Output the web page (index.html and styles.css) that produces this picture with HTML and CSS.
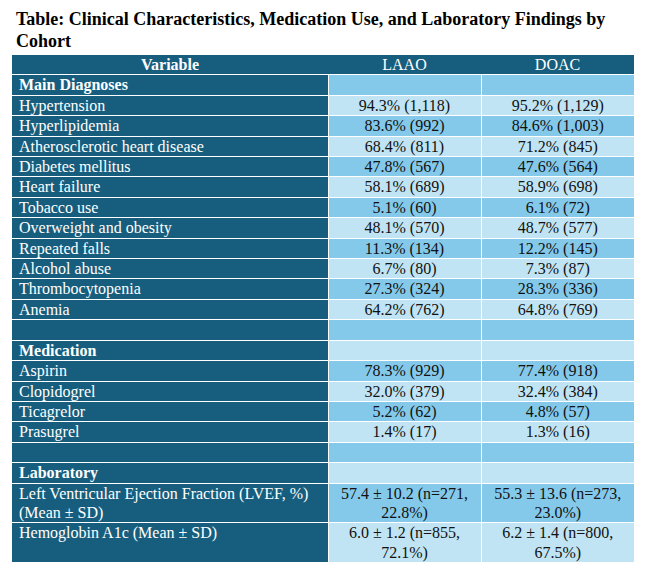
FILE: index.html
```html
<!DOCTYPE html>
<html>
<head>
<meta charset="utf-8">
<link rel="stylesheet" href="styles.css">
</head>
<body>
<div class="wrap">
  <h1 class="title">Table: Clinical Characteristics, Medication Use, and Laboratory Findings by Cohort</h1>
  <table class="data">
    <colgroup><col class="c1"><col class="c2"><col class="c3"></colgroup>
    <thead>
      <tr><th class="var">Variable</th><th>LAAO</th><th>DOAC</th></tr>
    </thead>
    <tbody>
      <tr class="mid"><td class="lbl b">Main Diagnoses</td><td></td><td></td></tr>
      <tr class="lt"><td class="lbl">Hypertension</td><td>94.3% (1,118)</td><td>95.2% (1,129)</td></tr>
      <tr class="mid"><td class="lbl">Hyperlipidemia</td><td>83.6% (992)</td><td>84.6% (1,003)</td></tr>
      <tr class="lt"><td class="lbl">Atherosclerotic heart disease</td><td>68.4% (811)</td><td>71.2% (845)</td></tr>
      <tr class="mid"><td class="lbl">Diabetes mellitus</td><td>47.8% (567)</td><td>47.6% (564)</td></tr>
      <tr class="lt"><td class="lbl">Heart failure</td><td>58.1% (689)</td><td>58.9% (698)</td></tr>
      <tr class="mid"><td class="lbl">Tobacco use</td><td>5.1% (60)</td><td>6.1% (72)</td></tr>
      <tr class="lt"><td class="lbl">Overweight and obesity</td><td>48.1% (570)</td><td>48.7% (577)</td></tr>
      <tr class="mid"><td class="lbl">Repeated falls</td><td>11.3% (134)</td><td>12.2% (145)</td></tr>
      <tr class="lt"><td class="lbl">Alcohol abuse</td><td>6.7% (80)</td><td>7.3% (87)</td></tr>
      <tr class="mid"><td class="lbl">Thrombocytopenia</td><td>27.3% (324)</td><td>28.3% (336)</td></tr>
      <tr class="lt"><td class="lbl">Anemia</td><td>64.2% (762)</td><td>64.8% (769)</td></tr>
      <tr class="mid"><td class="lbl">&nbsp;</td><td></td><td></td></tr>
      <tr class="lt"><td class="lbl b">Medication</td><td></td><td></td></tr>
      <tr class="mid"><td class="lbl">Aspirin</td><td>78.3% (929)</td><td>77.4% (918)</td></tr>
      <tr class="lt"><td class="lbl">Clopidogrel</td><td>32.0% (379)</td><td>32.4% (384)</td></tr>
      <tr class="mid"><td class="lbl">Ticagrelor</td><td>5.2% (62)</td><td>4.8% (57)</td></tr>
      <tr class="lt"><td class="lbl">Prasugrel</td><td>1.4% (17)</td><td>1.3% (16)</td></tr>
      <tr class="mid"><td class="lbl">&nbsp;</td><td></td><td></td></tr>
      <tr class="lt"><td class="lbl b">Laboratory</td><td></td><td></td></tr>
      <tr class="mid"><td class="lbl">Left Ventricular Ejection Fraction (LVEF, %) (Mean ± SD)</td><td>57.4 ± 10.2 (n=271, 22.8%)</td><td>55.3 ± 13.6 (n=273, 23.0%)</td></tr>
      <tr class="lt"><td class="lbl">Hemoglobin A1c (Mean ± SD)</td><td>6.0 ± 1.2 (n=855, 72.1%)</td><td>6.2 ± 1.4 (n=800, 67.5%)</td></tr>
    </tbody>
  </table>
</div>
</body>
</html>
```
FILE: styles.css
```css
html, body {
  margin: 0;
  padding: 0;
  background: #ffffff;
}
body {
  padding: 8px 14px 8px 12px;
  font-family: "Liberation Serif", "Times New Roman", serif;
  color: #111111;
}
.wrap {
  width: 622px;
}
.title {
  margin: 0 0 3px 0;
  padding: 0 0 0 4px;
  font-size: 18px;
  line-height: 22px;
  font-weight: bold;
  color: #000000;
}
.data {
  width: 622px;
  table-layout: fixed;
  border-collapse: collapse;
  font-size: 16px;
  line-height: 19.4px;
}
.c1 { width: 316px; }
.c2 { width: 153px; }
.c3 { width: 153px; }
.data th {
  background: #175e7e;
  color: #ffffff;
  font-weight: normal;
  text-align: center;
  padding: 0 6px;
  border: 0;
  border-bottom: 1px solid #ffffff;
}
.data th.var {
  font-weight: bold;
}
.data td {
  padding: 0 6px;
  border: 1px solid #ffffff;
  text-align: center;
  vertical-align: top;
}
.data tr td:first-child { border-left: 0; }
.data tr td:last-child { border-right: 0; }
.data tbody tr:last-child td { border-bottom: 0; }
.data td.lbl {
  background: #175e7e;
  color: #ffffff;
  text-align: left;
  padding-left: 7px;
}
.data td.b {
  font-weight: bold;
}
.mid td { background: #84c9ea; }
.lt td { background: #c0e4f4; }
```
